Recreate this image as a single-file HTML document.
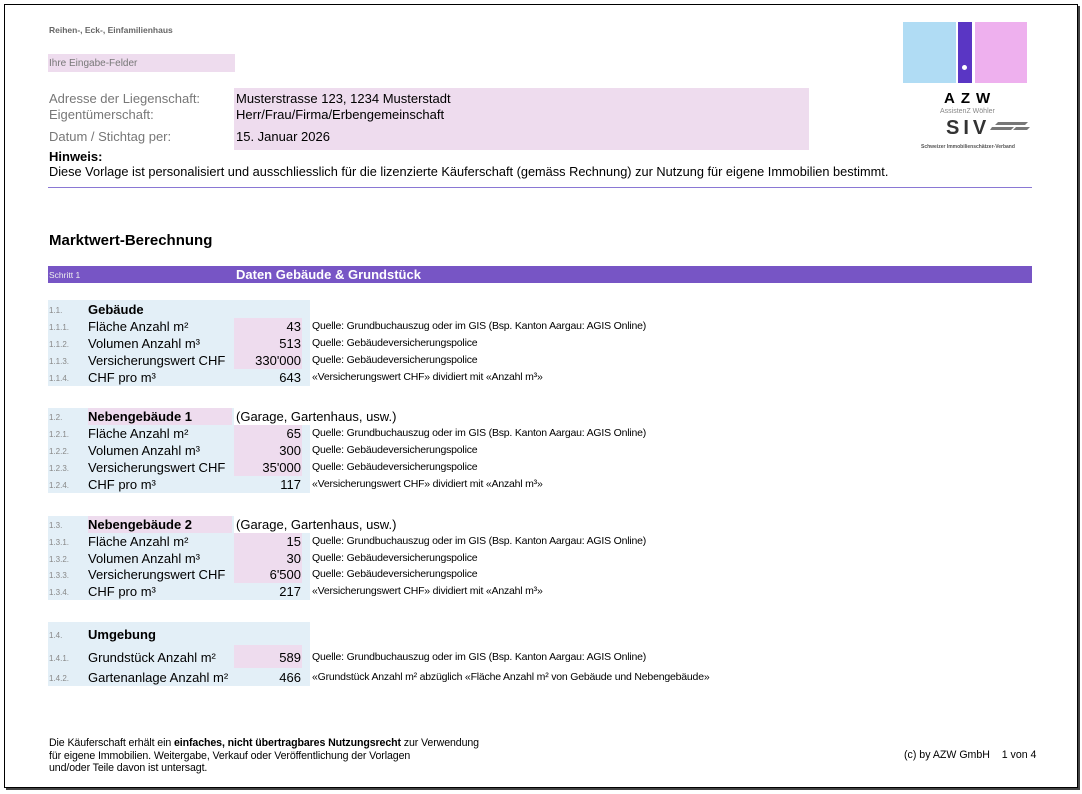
<!DOCTYPE html><html><head><meta charset="utf-8"><style>
body{margin:0;width:1082px;height:794px;background:#fff;position:relative;overflow:hidden;font-family:"Liberation Sans",sans-serif;color:#000}
.a{position:absolute;white-space:nowrap}
.frame{position:absolute;left:4px;top:4px;width:1072px;height:782px;border:1px solid #000;box-shadow:2px 2px 0 #444}
.n{font-size:8px;color:#888}
.l{font-size:13px}
.q{font-size:10.5px;letter-spacing:-0.2px}
.v{font-size:13px;text-align:right;width:66px}
.pk{background:#eedcee}
.bl{background:#e3eff7}
</style></head><body>
<div class="frame"></div>
<div class="a" style="left:49px;top:25px;font-size:8.5px;font-weight:bold;color:#666">Reihen-, Eck-, Einfamilienhaus</div>
<div class="a pk" style="left:48px;top:54px;width:187px;height:18px"></div>
<div class="a" style="left:49px;top:58px;font-size:10px;color:#777">Ihre Eingabe-Felder</div>
<div class="a pk" style="left:234px;top:88px;width:575px;height:62px"></div>
<div class="a" style="left:49px;top:91px;font-size:13px;color:#777">Adresse der Liegenschaft:</div>
<div class="a" style="left:49px;top:107px;font-size:13px;color:#777">Eigentümerschaft:</div>
<div class="a" style="left:49px;top:129px;font-size:13px;color:#777">Datum / Stichtag per:</div>
<div class="a" style="left:236px;top:91px;font-size:13px">Musterstrasse 123, 1234 Musterstadt</div>
<div class="a" style="left:236px;top:107px;font-size:13px">Herr/Frau/Firma/Erbengemeinschaft</div>
<div class="a" style="left:236px;top:129px;font-size:13px">15. Januar 2026</div>
<div class="a" style="left:49px;top:149px;font-size:13px;font-weight:bold">Hinweis:</div>
<div class="a" style="left:49px;top:164px;font-size:12.77px">Diese Vorlage ist personalisiert und ausschliesslich für die lizenzierte Käuferschaft (gemäss Rechnung) zur Nutzung für eigene Immobilien bestimmt.</div>
<div class="a" style="left:48px;top:187px;width:984px;height:1px;background:#8a78d4"></div>
<!-- logo -->
<div class="a" style="left:903px;top:22px;width:53px;height:61px;background:#b0dcf4"></div>
<div class="a" style="left:958px;top:22px;width:14px;height:61px;background:#5a36c4"></div>
<div class="a" style="left:962px;top:65px;width:5px;height:5px;border-radius:50%;background:#fff"></div>
<div class="a" style="left:975px;top:22px;width:52px;height:61px;background:#eeb0ee"></div>
<div class="a" style="left:944px;top:90px;font-size:15px;font-weight:bold;letter-spacing:6px">AZW</div>
<div class="a" style="left:940px;top:108px;font-size:7px;color:#888">AssistenZ Wöhler</div>
<div class="a" style="left:946px;top:117px;font-size:20px;font-weight:bold;letter-spacing:4px;color:#333">SIV</div>
<svg class="a" style="left:990px;top:120px" width="42" height="14"><path d="M8 2h30l-3 3H5z M2 7h22l-3 3H0z M26 7h14l-3 3H23z" fill="#777"/></svg>
<div class="a" style="left:921px;top:144px;font-size:5px;font-weight:bold;color:#555">Schweizer Immobilienschätzer-Verband</div>

<div class="a" style="left:49px;top:232px;font-size:15px;font-weight:bold">Marktwert-Berechnung</div>
<div class="a" style="left:48px;top:266px;width:984px;height:17px;background:#7755c5"></div>
<div class="a" style="left:49px;top:270px;font-size:8.5px;color:#eee">Schritt 1</div>
<div class="a" style="left:236px;top:267px;font-size:13px;font-weight:bold;color:#fff">Daten Gebäude &amp; Grundstück</div>

<!-- block 1 -->
<div class="a bl" style="left:48px;top:300px;width:262px;height:86px"></div>
<div class="a pk" style="left:234px;top:318px;width:68px;height:51px"></div>
<div class="a n" style="left:49px;top:306px">1.1.</div><div class="a l" style="left:88px;top:302px;font-weight:bold">Gebäude</div>
<div class="a n" style="left:49px;top:323px">1.1.1.</div><div class="a l" style="left:88px;top:319px">Fläche Anzahl m²</div><div class="a v" style="left:235px;top:319px">43</div><div class="a q" style="left:312px;top:320px">Quelle: Grundbuchauszug oder im GIS (Bsp. Kanton Aargau: AGIS Online)</div>
<div class="a n" style="left:49px;top:340px">1.1.2.</div><div class="a l" style="left:88px;top:336px">Volumen Anzahl m³</div><div class="a v" style="left:235px;top:336px">513</div><div class="a q" style="left:312px;top:337px">Quelle: Gebäudeversicherungspolice</div>
<div class="a n" style="left:49px;top:357px">1.1.3.</div><div class="a l" style="left:88px;top:353px">Versicherungswert CHF</div><div class="a v" style="left:235px;top:353px">330'000</div><div class="a q" style="left:312px;top:354px">Quelle: Gebäudeversicherungspolice</div>
<div class="a n" style="left:49px;top:374px">1.1.4.</div><div class="a l" style="left:88px;top:370px">CHF pro m³</div><div class="a v" style="left:235px;top:370px">643</div><div class="a q" style="left:312px;top:371px">«Versicherungswert CHF» dividiert mit «Anzahl m³»</div>

<!-- block 2 -->
<div class="a bl" style="left:48px;top:408px;width:262px;height:85px"></div>
<div class="a pk" style="left:88px;top:408px;width:144px;height:17px"></div>
<div class="a pk" style="left:234px;top:425px;width:68px;height:51px"></div>
<div class="a" style="left:234px;top:408px;width:180px;height:17px;background:#fff"></div>
<div class="a n" style="left:49px;top:413px">1.2.</div><div class="a l" style="left:88px;top:409px;font-weight:bold">Nebengebäude 1</div><div class="a l" style="left:236px;top:409px">(Garage, Gartenhaus, usw.)</div>
<div class="a n" style="left:49px;top:430px">1.2.1.</div><div class="a l" style="left:88px;top:426px">Fläche Anzahl m²</div><div class="a v" style="left:235px;top:426px">65</div><div class="a q" style="left:312px;top:427px">Quelle: Grundbuchauszug oder im GIS (Bsp. Kanton Aargau: AGIS Online)</div>
<div class="a n" style="left:49px;top:447px">1.2.2.</div><div class="a l" style="left:88px;top:443px">Volumen Anzahl m³</div><div class="a v" style="left:235px;top:443px">300</div><div class="a q" style="left:312px;top:444px">Quelle: Gebäudeversicherungspolice</div>
<div class="a n" style="left:49px;top:464px">1.2.3.</div><div class="a l" style="left:88px;top:460px">Versicherungswert CHF</div><div class="a v" style="left:235px;top:460px">35'000</div><div class="a q" style="left:312px;top:461px">Quelle: Gebäudeversicherungspolice</div>
<div class="a n" style="left:49px;top:481px">1.2.4.</div><div class="a l" style="left:88px;top:477px">CHF pro m³</div><div class="a v" style="left:235px;top:477px">117</div><div class="a q" style="left:312px;top:478px">«Versicherungswert CHF» dividiert mit «Anzahl m³»</div>

<!-- block 3 -->
<div class="a bl" style="left:48px;top:516px;width:262px;height:84px"></div>
<div class="a pk" style="left:88px;top:516px;width:144px;height:17px"></div>
<div class="a pk" style="left:234px;top:533px;width:68px;height:50px"></div>
<div class="a" style="left:234px;top:516px;width:180px;height:17px;background:#fff"></div>
<div class="a n" style="left:49px;top:521px">1.3.</div><div class="a l" style="left:88px;top:517px;font-weight:bold">Nebengebäude 2</div><div class="a l" style="left:236px;top:517px">(Garage, Gartenhaus, usw.)</div>
<div class="a n" style="left:49px;top:538px">1.3.1.</div><div class="a l" style="left:88px;top:534px">Fläche Anzahl m²</div><div class="a v" style="left:235px;top:534px">15</div><div class="a q" style="left:312px;top:535px">Quelle: Grundbuchauszug oder im GIS (Bsp. Kanton Aargau: AGIS Online)</div>
<div class="a n" style="left:49px;top:555px">1.3.2.</div><div class="a l" style="left:88px;top:551px">Volumen Anzahl m³</div><div class="a v" style="left:235px;top:551px">30</div><div class="a q" style="left:312px;top:552px">Quelle: Gebäudeversicherungspolice</div>
<div class="a n" style="left:49px;top:571px">1.3.3.</div><div class="a l" style="left:88px;top:567px">Versicherungswert CHF</div><div class="a v" style="left:235px;top:567px">6'500</div><div class="a q" style="left:312px;top:568px">Quelle: Gebäudeversicherungspolice</div>
<div class="a n" style="left:49px;top:588px">1.3.4.</div><div class="a l" style="left:88px;top:584px">CHF pro m³</div><div class="a v" style="left:235px;top:584px">217</div><div class="a q" style="left:312px;top:585px">«Versicherungswert CHF» dividiert mit «Anzahl m³»</div>

<!-- block 4 -->
<div class="a bl" style="left:48px;top:622px;width:262px;height:64px"></div>
<div class="a pk" style="left:234px;top:645px;width:68px;height:23px"></div>
<div class="a n" style="left:49px;top:631px">1.4.</div><div class="a l" style="left:88px;top:627px;font-weight:bold">Umgebung</div>
<div class="a n" style="left:49px;top:654px">1.4.1.</div><div class="a l" style="left:88px;top:650px">Grundstück Anzahl m²</div><div class="a v" style="left:235px;top:650px">589</div><div class="a q" style="left:312px;top:651px">Quelle: Grundbuchauszug oder im GIS (Bsp. Kanton Aargau: AGIS Online)</div>
<div class="a n" style="left:49px;top:674px">1.4.2.</div><div class="a l" style="left:88px;top:670px">Gartenanlage Anzahl m²</div><div class="a v" style="left:235px;top:670px">466</div><div class="a q" style="left:312px;top:671px">«Grundstück Anzahl m² abzüglich «Fläche Anzahl m² von Gebäude und Nebengebäude»</div>

<div class="a" style="left:49px;top:737px;font-size:10.6px;line-height:12.5px;letter-spacing:-0.1px">Die Käuferschaft erhält ein <b>einfaches, nicht übertragbares Nutzungsrecht</b> zur Verwendung<br>für eigene Immobilien. Weitergabe, Verkauf oder Veröffentlichung der Vorlagen<br>und/oder Teile davon ist untersagt.</div>
<div class="a" style="left:904px;top:749px;font-size:10.6px">(c) by AZW GmbH &nbsp;&nbsp; 1 von 4</div>
</body></html>
